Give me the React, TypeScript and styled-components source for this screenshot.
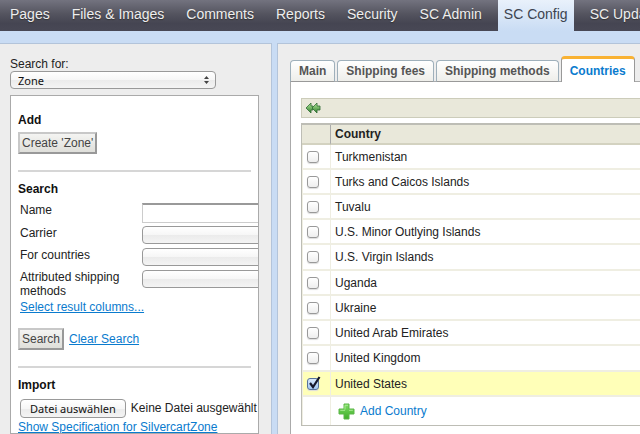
import React, { useState } from "react";
import styled, { createGlobalStyle, css } from "styled-components";

const GlobalStyle = createGlobalStyle`
  * { box-sizing: border-box; }
  body {
    margin: 0;
    background: #c9dcf4;
    color: #222;
    font: 12px/14px "Liberation Sans", Arial, sans-serif;
  }
  button, input, select { font: inherit; margin: 0; }
`;

const Page = styled.div`
  display: flex;
  flex-direction: column;
  height: 100vh;
  overflow: hidden;
`;

const Nav = styled.nav`
  display: flex;
  flex: none;
  gap: 10px;
  height: 31px;
  padding-left: 4px;
  overflow: hidden;
  background: linear-gradient(#73737f, #54545f 45%, #454552 75%, #484855);
`;

const NavLink = styled.a<{ $active?: boolean }>`
  flex: none;
  padding: 0 6px;
  font-size: 14px;
  line-height: 29px;
  text-decoration: none;
  white-space: nowrap;
  color: #eee;
  text-shadow: 0 1px 1px #333;
  ${(p) =>
    p.$active &&
    css`
      color: #3d4450;
      text-shadow: none;
      background: linear-gradient(#e9f1fb, #c9dcf4);
    `}
`;

const Workspace = styled.div`
  display: grid;
  grid-template-columns: 272px minmax(0, 1fr);
  gap: 5px;
  flex: 1;
  min-height: 0;
  padding-top: 12px;
`;

const Sidebar = styled.aside`
  display: flex;
  flex-direction: column;
  min-height: 0;
  padding: 13px 12px 0 10px;
  background: #ededed;
  border: solid #b3c4da;
  border-width: 1px 1px 0 0;
`;

const Main = styled.main`
  display: flex;
  flex-direction: column;
  min-width: 0;
  padding: 13px 0 0 12px;
  background: #ededed;
  border: solid #b3c4da;
  border-width: 1px 0 0 1px;
`;

const selectLook = css`
  appearance: none;
  height: 18px;
  padding: 0 7px;
  border: 1px solid #999;
  border-radius: 4px;
  background: linear-gradient(#fff, #f6f6f6 50%, #ebebeb 51%, #f4f4f4);
  font-family: "Noto Sans", sans-serif;
  font-size: 11px;
  line-height: 15px;
  color: #111;
`;

const SelectWrap = styled.div`
  display: grid;
  grid-template-columns: 206px;
  align-items: center;
  margin-bottom: 6px;
  > * { grid-area: 1 / 1; }
  svg { justify-self: end; margin-right: 7px; pointer-events: none; }
`;

const ZoneSelect = styled.select`
  ${selectLook}
`;

const Frame = styled.div`
  flex: 1;
  min-height: 0;
  overflow: hidden;
  padding: 17px 7px 0;
  background: #fff;
  border: 1px solid #aaa;
`;

const Section = styled.section`
  & + & {
    margin-top: 16px;
    padding-top: 10px;
    border-top: 2px solid #d6d6d6;
  }
`;

const Heading = styled.h3`
  margin: 0;
  font-size: 12px;
  line-height: 14px;
  color: #111;
`;

const ActionButton = styled.button`
  height: 22px;
  padding: 0 2px;
  border: 2px solid;
  border-color: #c8c8c8 #999 #999 #c8c8c8;
  background: linear-gradient(#f4f4f2, #dfdfda);
  color: #444;
`;

const AddButton = styled(ActionButton)`
  display: block;
  margin-top: 5px;
`;

const Fields = styled.div`
  display: grid;
  grid-template-columns: 122px 180px;
  row-gap: 4px;
  margin-top: 7px;
  padding-left: 2px;
`;

const FieldLabel = styled.label`
  line-height: 14px;
`;

const TextInput = styled.input`
  height: 20px;
  margin-bottom: -1px;
  padding: 0 3px;
  border: 1px solid #ccc;
  border-top: 2px solid #999;
`;

const FieldSelect = styled.select`
  ${selectLook}
`;

const Link = styled.a`
  color: #0a7bce;
`;

const ColumnsLink = styled(Link)`
  display: block;
  margin: 2px 0 14px 2px;
`;

const Actions = styled.div`
  display: flex;
  align-items: center;
  gap: 5px;
`;

const FileRow = styled.div`
  display: flex;
  gap: 5px;
  margin: 7px 0 2px 2px;
  line-height: 18px;
  white-space: nowrap;
`;

const FileInput = styled.input`
  width: 1px;
  height: 1px;
  margin-right: -6px;
  opacity: 0;
`;

const FileButton = styled.label`
  ${selectLook}
  height: 19px;
  padding: 0 9px;
  line-height: 17px;
`;

const Tabs = styled.div`
  display: flex;
  align-items: flex-end;
  gap: 2px;
  height: 25px;
  z-index: 1;
  margin-bottom: -1px;
`;

const Tab = styled.button<{ $active?: boolean }>`
  flex: none;
  height: 22px;
  padding: 0 8px;
  border: 1px solid #9fb0bb;
  border-bottom-color: #999;
  border-radius: 4px 4px 0 0;
  background: linear-gradient(#fff, #eeeeea);
  font-weight: bold;
  color: #555;
  ${(p) =>
    p.$active &&
    css`
      height: 26px;
      border-color: #999;
      border-top: 3px solid #f9b233;
      border-bottom: 0;
      background: #fff;
      color: #0a7bce;
    `}
`;

const TabPanel = styled.div`
  flex: 1;
  padding: 16px 0 0 10px;
  background: #fff;
  border: solid #aaa;
  border-width: 1px 0 0 1px;
`;

const Toolbar = styled.div`
  display: flex;
  align-items: center;
  height: 20px;
  margin-bottom: 5px;
  padding-left: 3px;
  background: #e9e8da;
  border: 1px solid #ccccba;
  border-right: 0;
`;

const IconButton = styled.button`
  display: flex;
  padding: 0;
  border: 0;
  background: none;
`;

const Table = styled.table`
  width: 100%;
  border-collapse: separate;
  border-spacing: 0;
  border: solid #bdbdb5;
  border-width: 2px 0 1px 1px;
`;

const Head = styled.th`
  height: 20px;
  padding: 0 4px;
  text-align: left;
  background: #e9e8da;
  border-bottom: 2px solid #d3d2c0;
  & + & { border-left: 1px solid #aaa; }
`;

const Row = styled.tr<{ $selected?: boolean }>`
  background: ${(p) => (p.$selected ? "#ffffb8" : "#fff")};
`;

const Cell = styled.td`
  height: 25px;
  padding: 0 4px;
  border-left: 1px solid #efeee2;
  border-bottom: 2px solid #efeee2;
  ${Row}:nth-child(4n + 5) & { height: 26px; }
  ${Row}:last-child & { height: 28px; border-bottom: 0; }
`;

const CheckCell = styled(Cell)`
  width: 28px;
`;

const CheckBox = styled.span`
  display: grid;
  width: 14px;
  > * { grid-area: 1 / 1; }
  svg { margin: -2px 0 0 0; pointer-events: none; overflow: visible; }
`;

const Check = styled.input`
  appearance: none;
  width: 12px;
  height: 12px;
  border: 1px solid #999;
  border-radius: 3px;
  background: linear-gradient(#fff, #eee);
  box-shadow: 0 1px 1px #ddd;
  &:checked {
    border-color: #56729c;
    background: linear-gradient(#d7e7fa, #a3c8f3);
  }
`;

const AddLink = styled.a`
  display: flex;
  align-items: center;
  gap: 5px;
  padding-left: 3px;
  color: #0a7bce;
  text-decoration: none;
`;

const UpDown = () => (
  <svg width="5" height="8" viewBox="0 0 5 8" fill="#444" aria-hidden="true">
    <path d="M2.5 0 5 3H0zM0 5h5L2.5 8z" />
  </svg>
);

const Back = () => (
  <svg width="16" height="12" viewBox="0 0 16 12" aria-hidden="true">
    <defs>
      <linearGradient id="back" x2="0" y2="1">
        <stop stopColor="#b5e99c" />
        <stop offset="1" stopColor="#2d7d2c" />
      </linearGradient>
    </defs>
    <g fill="url(#back)" stroke="#2d6b32" strokeWidth="0.8" strokeLinejoin="round">
      <path d="M1 6 6 1v3h2v4H6v3z" />
      <path d="M7 6l5-5v3h3v4h-3v3z" />
    </g>
  </svg>
);

const Plus = () => (
  <svg width="17" height="17" viewBox="0 0 17 17" aria-hidden="true">
    <defs>
      <linearGradient id="plus" x2="0" y2="1">
        <stop stopColor="#7fdc65" />
        <stop offset="1" stopColor="#3fae2a" />
      </linearGradient>
    </defs>
    <path d="M6 1h5v5h5v5h-5v5H6v-5H1V6h5z" fill="url(#plus)" stroke="#5cb648" strokeLinejoin="round" />
    <path d="M7 6.5V2.3h3M2.3 7.3H7M11 7.3h3.8" fill="none" stroke="#a8eb92" />
  </svg>
);

const Tick = () => (
  <svg width="14" height="14" viewBox="0 0 14 14" aria-hidden="true">
    <path d="M3 7l3 4 6.500-10" fill="none" stroke="#15182b" strokeWidth="2.200" />
  </svg>
);

const navItems = ["Pages", "Files & Images", "Comments", "Reports", "Security", "SC Admin", "SC Config", "SC Update"];
const tabs = ["Main", "Shipping fees", "Shipping methods", "Countries"];
const filters = ["Carrier", "For countries", "Attributed shipping methods"];
const countries = [
  "Turkmenistan",
  "Turks and Caicos Islands",
  "Tuvalu",
  "U.S. Minor Outlying Islands",
  "U.S. Virgin Islands",
  "Uganda",
  "Ukraine",
  "United Arab Emirates",
  "United Kingdom",
  "United States",
];

export default function App() {
  const [selected, setSelected] = useState<string[]>(["United States"]);
  const toggle = (name: string) =>
    setSelected((list) => (list.includes(name) ? list.filter((n) => n !== name) : [...list, name]));

  return (
    <Page>
      <GlobalStyle />
      <Nav>
        {navItems.map((item) => (
          <NavLink key={item} href="#" $active={item === "SC Config"}>{item}</NavLink>
        ))}
      </Nav>
      <Workspace>
        <Sidebar>
          <label htmlFor="model">Search for:</label>
          <SelectWrap>
            <ZoneSelect id="model"><option>Zone</option></ZoneSelect>
            <UpDown />
          </SelectWrap>
          <Frame>
            <Section>
              <Heading>Add</Heading>
              <AddButton>Create 'Zone'</AddButton>
            </Section>
            <Section>
              <Heading>Search</Heading>
              <Fields>
                <FieldLabel htmlFor="name">Name</FieldLabel>
                <TextInput id="name" type="text" />
                {filters.map((name) => (
                  <React.Fragment key={name}>
                    <FieldLabel htmlFor={name.replace(/ /g, "-")}>{name}</FieldLabel>
                    <FieldSelect id={name.replace(/ /g, "-")}><option value="" /></FieldSelect>
                  </React.Fragment>
                ))}
              </Fields>
              <ColumnsLink href="#">Select result columns...</ColumnsLink>
              <Actions>
                <ActionButton>Search</ActionButton>
                <Link href="#">Clear Search</Link>
              </Actions>
            </Section>
            <Section>
              <Heading>Import</Heading>
              <FileRow>
                <FileButton htmlFor="file">Datei auswählen</FileButton>
                <FileInput id="file" type="file" />
                <span>Keine Datei ausgewählt</span>
              </FileRow>
              <Link href="#">Show Specification for SilvercartZone</Link>
            </Section>
          </Frame>
        </Sidebar>
        <Main>
          <Tabs role="tablist">
            {tabs.map((tab) => (
              <Tab key={tab} role="tab" aria-selected={tab === "Countries"} $active={tab === "Countries"}>{tab}</Tab>
            ))}
          </Tabs>
          <TabPanel role="tabpanel">
            <Toolbar>
              <IconButton aria-label="Previous page"><Back /></IconButton>
            </Toolbar>
            <Table>
              <thead>
                <tr><Head /><Head>Country</Head></tr>
              </thead>
              <tbody>
                {countries.map((name, i) => (
                  <Row key={name} $selected={selected.includes(name)}>
                    <CheckCell>
                      <CheckBox>
                        <Check
                          id={`country-${i}`}
                          type="checkbox"
                          checked={selected.includes(name)}
                          onChange={() => toggle(name)}
                        />
                        {selected.includes(name) && <Tick />}
                      </CheckBox>
                    </CheckCell>
                    <Cell><label htmlFor={`country-${i}`}>{name}</label></Cell>
                  </Row>
                ))}
                <Row>
                  <CheckCell />
                  <Cell><AddLink href="#"><Plus />Add Country</AddLink></Cell>
                </Row>
              </tbody>
            </Table>
          </TabPanel>
        </Main>
      </Workspace>
    </Page>
  );
}
